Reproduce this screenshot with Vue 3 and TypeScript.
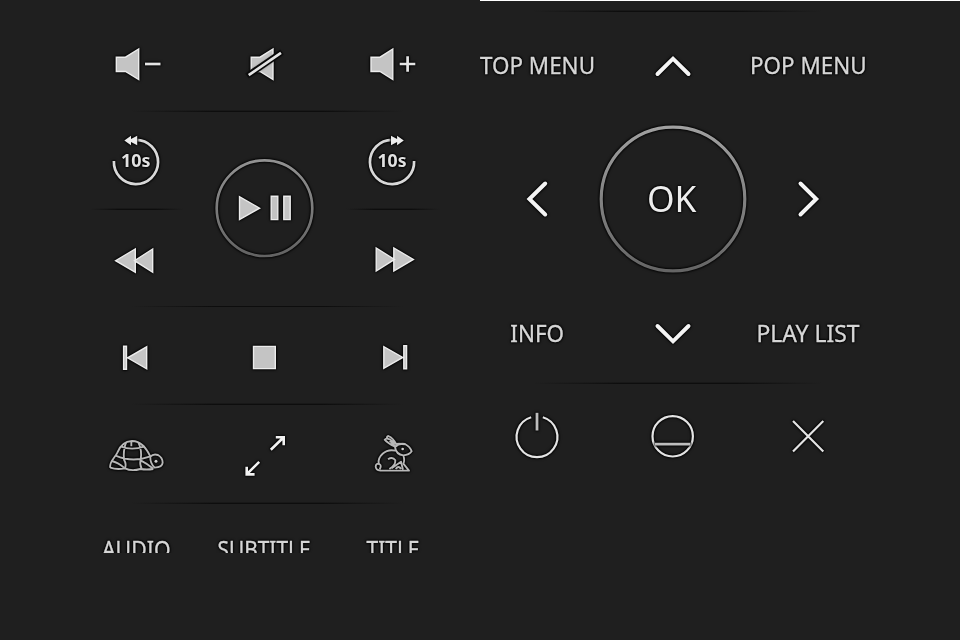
<script setup lang="ts">
interface Label {
  text: string
  box: string
  x: number
  y: number
  width: number
}

const trackLabels: Label[] = [
  { text: 'AUDIO', box: '72 504 128 49', x: 102, y: 557.5, width: 68.5 },
  { text: 'SUBTITLE', box: '200 504 128 49', x: 217.5, y: 557.5, width: 93 },
  { text: 'TITLE', box: '328 504 128 49', x: 366.5, y: 557.5, width: 53 },
]
</script>

<template>
  <main class="remote">
    <section class="panel playback">
      <div class="row ruled volume">
        <svg viewBox="72 14 128 98">
          <path class="solid" d="M116.3 57.2H125.5L138.7 49V79.5L125.5 71.5H116.3Z" />
          <path class="line" d="M145 64H160.5" />
        </svg>
        <svg viewBox="200 14 128 98">
          <path class="solid" d="M251.2 57.2H260L273 49V79.5L260 71.5H251.2Z" />
          <path class="cut" d="M247 76L282 52" />
          <path class="line" d="M248.7 75.2L281 52.8" />
        </svg>
        <svg viewBox="328 14 128 98">
          <path class="solid" d="M371 57.2H380L392.8 49V79.5L380 71.5H371Z" />
          <path class="line" d="M399.7 64H415.3M407.6 56.3V71.8" />
        </svg>
      </div>

      <div class="transport">
        <div class="side">
          <svg class="ruled short" viewBox="72 112 128 98">
            <path class="line arc" d="M113.9 161A22.1 22.1 0 1 0 136 139.9" />
            <path class="head" d="M124.3 140.5L131 135.7V139L137.2 135.7V145.3L131 142V145.3Z" />
            <text class="seconds" x="121" y="167.4" textLength="29.5" lengthAdjust="spacingAndGlyphs">10s</text>
          </svg>
          <svg viewBox="72 210 128 97">
            <path class="solid" d="M135.3 249V272.3L115.6 260.7ZM152.7 249V272.3L134.5 260.7Z" />
          </svg>
        </div>
        <svg class="play" viewBox="200 112 128 195">
          <defs>
            <linearGradient id="ring-small" x1="0" y1="0" x2="0" y2="1">
              <stop offset="0" stop-color="#929292" />
              <stop offset="1" stop-color="#636363" />
            </linearGradient>
          </defs>
          <circle class="ring" cx="264.5" cy="208.2" r="47.8" stroke="url(#ring-small)" />
          <path class="solid" d="M239.5 196.7V219.6L259.6 208.2ZM271.2 196.2H277.8V219.6H271.2ZM283.8 196.2H290.2V219.6H283.8Z" />
        </svg>
        <div class="side">
          <svg class="ruled short" viewBox="328 112 128 98">
            <path class="line arc" d="M414.1 161A22.1 22.1 0 1 1 392 139.9" />
            <path class="head" d="M403.8 140.5L397.1 135.7V139L391 135.7V145.3L397.1 142V145.3Z" />
            <text class="seconds" x="377.5" y="167.4" textLength="29" lengthAdjust="spacingAndGlyphs">10s</text>
          </svg>
          <svg viewBox="328 210 128 97">
            <path class="solid" d="M376.2 248V271L394.5 259.4ZM393.8 248V271L413.4 259.4Z" />
          </svg>
        </div>
      </div>

      <div class="row ruled skip">
        <svg viewBox="72 307 128 98">
          <path class="solid" d="M146.7 346.8V368.8L127.6 357.8ZM123.6 346.2H126.5V369.2H123.6Z" />
        </svg>
        <svg viewBox="200 307 128 98">
          <path class="solid" d="M253.5 346.4H275.3V368.6H253.5Z" />
        </svg>
        <svg viewBox="328 307 128 98">
          <path class="solid" d="M383.8 346.6V368.4L402.8 357.4ZM403.8 345.8H406.6V368.8H403.8Z" />
        </svg>
      </div>

      <div class="row ruled speed">
        <svg viewBox="72 405 128 99">
          <g class="sketch" transform="translate(90 420) scale(.33333)">
            <path d="M61 143C56 127 76 112 82 98C90 77 105 64 126 63C153 63 168 84 181 109M61 143Q80 150 105 145Q125 155 151 147Q170 150 190 147" />
            <path d="M77 107Q128 129 181 109M92 79Q125 93 164 79M108 67Q99 93 102 119Q110 132 105 145M124 64V79M145 67Q157 92 152 120Q148 133 155 146M65 123Q84 127 102 143M152 121Q170 130 190 146" />
            <path d="M181 110Q190 100 204 105Q218 113 218 128Q217 142 194 143Q180 130 181 110" />
            <circle class="eye" cx="198" cy="124" r="4.5" />
          </g>
        </svg>
        <svg viewBox="200 405 128 99">
          <path class="arrow" d="M270.8 449.8L283.2 437.7M275.8 437.3H283.7V445.2M259.2 461.8L247.1 473.9M246.7 466.7V474.4H254.6" />
        </svg>
        <svg viewBox="328 405 128 99">
          <g class="sketch" transform="translate(359 425) scale(.33333)">
            <path d="M108 65Q85 54 77 44Q81 38 92 43L111 57Q103 39 88 33Q83 34 84 41M92 47L110 65M111 57Q122 55 138 58" />
            <path d="M108 66Q119 54 138 57Q154 66 158 79Q151 90 133 91Q111 88 108 66M109 77C77 70 56 96 59 116M133 91Q138 108 133 116L150 137H64Q50 136 50 124Q52 114 61 117Q69 121 62 133" />
            <path d="M87 103Q101 94 109 106Q110 120 91 132M98 130L126 110L132 134M110 132Q119 120 126 132" />
            <circle class="eye" cx="131" cy="72" r="4" />
          </g>
        </svg>
      </div>

      <div class="row tracks">
        <svg v-for="label in trackLabels" :key="label.text" :viewBox="label.box">
          <text class="label small" :x="label.x" :y="label.y" :textLength="label.width" lengthAdjust="spacingAndGlyphs">{{ label.text }}</text>
        </svg>
      </div>
    </section>

    <section class="panel navigation">
      <div class="rule-top"></div>
      <div class="row menus">
        <svg viewBox="480 12 117 108">
          <text class="label" x="480" y="74.2" textLength="115" lengthAdjust="spacingAndGlyphs">TOP MENU</text>
        </svg>
        <svg viewBox="597 12 152 108"><path class="chevron" d="M657.5 74L673 58.7L688.5 74" /></svg>
        <svg viewBox="749 12 126 108">
          <text class="label" x="750" y="74.2" textLength="116.5" lengthAdjust="spacingAndGlyphs">POP MENU</text>
        </svg>
      </div>
      <div class="row confirm">
        <svg viewBox="480 120 117 160"><path class="chevron" d="M545.2 183.5L529.4 199L545.2 214.5" /></svg>
        <svg viewBox="597 120 152 160">
          <defs>
            <linearGradient id="ring-large" x1="0" y1="0" x2="0" y2="1">
              <stop offset="0" stop-color="#a0a0a0" />
              <stop offset="1" stop-color="#656565" />
            </linearGradient>
          </defs>
          <circle class="ring big" cx="673" cy="199" r="71.8" stroke="url(#ring-large)" />
          <text class="label ok" x="647" y="212.3" textLength="49.5" lengthAdjust="spacingAndGlyphs">OK</text>
        </svg>
        <svg viewBox="749 120 126 160"><path class="chevron" d="M800.5 183.5L816.2 199L800.5 214.5" /></svg>
      </div>
      <div class="row ruled info">
        <svg viewBox="480 280 117 104">
          <text class="label" x="510.3" y="342.2" textLength="53.7" lengthAdjust="spacingAndGlyphs">INFO</text>
        </svg>
        <svg viewBox="597 280 152 104"><path class="chevron" d="M657.5 326L673 341.3L688.5 326" /></svg>
        <svg viewBox="749 280 126 104">
          <text class="label" x="756.5" y="342.2" textLength="103" lengthAdjust="spacingAndGlyphs">PLAY LIST</text>
        </svg>
      </div>
      <div class="row power">
        <svg viewBox="480 384 117 106">
          <path class="line thin" d="M531.2 417.2A20.4 20.4 0 1 0 542.8 417.2" />
          <path class="stem" d="M537 412.8V430.5" />
        </svg>
        <svg viewBox="597 384 152 106">
          <circle class="line thin" cx="672.7" cy="436.3" r="20.2" />
          <path class="stem" d="M655 444.2H690.4" />
        </svg>
        <svg viewBox="749 384 126 106"><path class="line thin" d="M793 421L823.3 451.6M823.3 421L793 451.6" /></svg>
      </div>
    </section>
  </main>
</template>

<style>
body {
  background: #1f1f1f;
}
</style>

<style scoped>
.remote {
  display: flex;
  width: 960px;
  height: 640px;
  overflow: hidden;
  background: #1f1f1f;
}
.panel {
  box-sizing: border-box;
  width: 480px;
}
.playback {
  padding: 14px 24px 0 72px;
}
.navigation {
  border-top: 1px solid #fff;
}
.row {
  display: grid;
  grid-template-columns: 128px 128px 128px;
}
.navigation .row {
  grid-template-columns: 117px 152px 126px;
}
.transport {
  display: grid;
  grid-template-columns: 128px 128px 128px;
  height: 195px;
  background: linear-gradient(90deg, transparent, #0d0d0d 30%, #0d0d0d 70%, transparent) 58px 100% / 275px 1px no-repeat;
}
.side {
  display: grid;
  grid-template-rows: 98px 97px;
}
.volume, .skip { height: 98px; }
.skip { border: 0; }
.speed { height: 99px; }
.tracks { height: 49px; }
.rule-top { height: 11px; }
.menus { height: 108px; }
.confirm { height: 160px; }
.info { height: 104px; }
.power { height: 106px; }
svg {
  display: block;
  width: 100%;
  height: 100%;
  overflow: hidden;
}

/* Engraved separators that fade out at both ends */
.ruled, .rule-top {
  background-image:
    linear-gradient(90deg, transparent, #0d0d0d 30%, #0d0d0d 70%, transparent),
    linear-gradient(90deg, transparent, #181818 30%, #181818 70%, transparent);
  background-repeat: no-repeat;
  background-size: 275px 1px, 275px 1px;
  background-position: 58px 100%, 58px calc(100% - 1px);
}
.navigation .ruled, .rule-top {
  background-size: 290px 1px, 290px 1px;
  background-position: 53px 100%, 53px calc(100% - 1px);
}
.ruled.short {
  background-size: 94px 1px, 94px 1px;
  background-position: 18px 100%, 18px calc(100% - 1px);
}

path, circle, text {
  filter: drop-shadow(0 0 1px #000) drop-shadow(0 0 1px #000);
}
.solid {
  fill: #c4c4c4;
  stroke: #ececec;
  stroke-width: 1.4;
}
.line {
  fill: none;
  stroke: #e4e4e4;
  stroke-width: 2.7;
}
.line.arc {
  stroke: #d8d8d8;
}
.line.thin {
  stroke-width: 2.2;
}
.stem {
  stroke: #bdbdbd;
  stroke-width: 2.8;
}
.cut {
  stroke: #111;
  stroke-width: 6.2;
  filter: none;
}
.head {
  fill: #ececec;
}
.arrow {
  fill: none;
  stroke: #f2f2f2;
  stroke-width: 2.6;
}
.chevron {
  fill: none;
  stroke: #f4f4f4;
  stroke-width: 4;
  stroke-linecap: round;
}
.ring {
  fill: none;
  stroke-width: 2.7;
}
.ring.big {
  stroke-width: 3.2;
}
.sketch {
  fill: none;
  stroke: #b8b8b8;
  stroke-width: 5.6;
  stroke-linejoin: round;
  filter: drop-shadow(0 0 3px #000) drop-shadow(0 0 3px #000);
}
.sketch path, .sketch circle {
  filter: none;
}
.eye {
  fill: #d0d0d0;
  stroke: none;
}
.label {
  font: 400 24px "Noto Sans", "Open Sans", sans-serif;
  fill: #d6d6d6;
  stroke: #d6d6d6;
  stroke-width: 0.35;
}
.label.small {
  font-size: 23px;
}
.label.ok {
  font-size: 36.5px;
  fill: #ededed;
  stroke: none;
}
.seconds {
  font: 700 18px "Noto Sans", "Open Sans", sans-serif;
  fill: #e2e2e2;
}
</style>
